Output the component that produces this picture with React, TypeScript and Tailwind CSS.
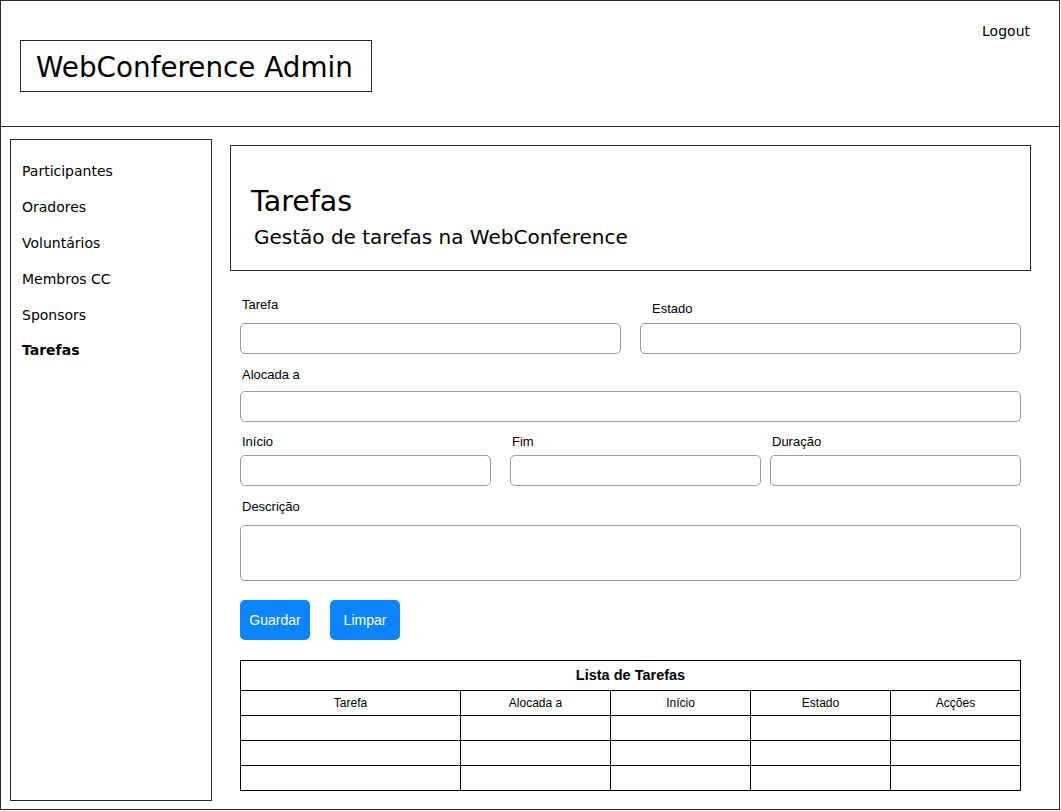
import React from 'react';

const sketch = { fontFamily: '"DejaVu Sans", Verdana, sans-serif' };
const sans = { fontFamily: '"Liberation Sans", Arial, Helvetica, sans-serif' };

const navItems = ['Participantes', 'Oradores', 'Voluntários', 'Membros CC', 'Sponsors', 'Tarefas'];
const columns = [
  { label: 'Tarefa', w: 'w-[220px]' },
  { label: 'Alocada a', w: 'w-[150px]' },
  { label: 'Início', w: 'w-[140px]' },
  { label: 'Estado', w: 'w-[140px]' },
  { label: 'Acções', w: 'w-[130px]' },
];

function Field({ className = '' }: { className?: string }) {
  return <div className={`h-[31px] rounded-[5px] border border-[#9a9a9a] bg-white ${className}`} />;
}

export default function App() {
  return (
    <div className="w-[1061px] h-[811px] bg-white text-black overflow-hidden">
      {/* Header */}
      <header className="w-[1060px] h-[127px] border border-[#2a2a2a] flex justify-between" style={sketch}>
        <div className="mt-[39px] ml-[19px] w-[352px] h-[52px] border border-[#2a2a2a] flex items-center pl-[15px] pt-[3px] text-[27.8px] leading-none whitespace-nowrap">
          WebConference Admin
        </div>
        <div className="mt-[21px] mr-[29px] text-[14px] leading-[18px]">Logout</div>
      </header>

      {/* Main */}
      <div className="w-[1060px] h-[683px] border-x border-b border-[#2a2a2a] flex pl-[9px] pt-[12px]">
        {/* Sidebar */}
        <nav className="w-[202px] h-[662px] border border-[#2a2a2a] pt-[14px] pl-[11px]" style={sketch}>
          {navItems.map((item) => (
            <div
              key={item}
              className={`h-[35.8px] flex items-center text-[14px] ${item === 'Tarefas' ? 'font-bold' : ''}`}
            >
              {item}
            </div>
          ))}
        </nav>

        {/* Content */}
        <div className="ml-[18px] pt-[6px] w-[801px]">
          <div className="w-[801px] h-[126px] border border-[#2a2a2a] pl-[20px] pt-[39px]" style={sketch}>
            <div className="text-[28.5px] leading-[34px]">Tarefas</div>
            <div className="ml-[3px] text-[20px] leading-[24px] mt-[6px] whitespace-nowrap">
              Gestão de tarefas na WebConference
            </div>
          </div>

          <div className="ml-[10px] w-[781px] text-[13px] leading-[15px]" style={sans}>
            {/* Row 1 */}
            <div className="flex gap-[19px] mt-[26px]">
              <div className="w-[381px]">
                <div className="pl-[2px] h-[15px]">Tarefa</div>
                <Field className="mt-[11px]" />
              </div>
              <div className="w-[381px]">
                <div className="pl-[12px] pt-[4px] h-[15px]">Estado</div>
                <Field className="mt-[11px]" />
              </div>
            </div>

            {/* Row 2 */}
            <div className="mt-[13px] pl-[2px]">Alocada a</div>
            <Field className="mt-[9px]" />

            {/* Row 3 */}
            <div className="flex mt-[12px]">
              <div className="w-[251px]">
                <div className="pl-[2px]">Início</div>
                <Field className="mt-[6px]" />
              </div>
              <div className="w-[251px] ml-[19px]">
                <div className="pl-[2px]">Fim</div>
                <Field className="mt-[6px]" />
              </div>
              <div className="w-[251px] ml-[9px]">
                <div className="pl-[2px]">Duração</div>
                <Field className="mt-[6px]" />
              </div>
            </div>

            {/* Row 4 */}
            <div className="mt-[13px] pl-[2px]">Descrição</div>
            <div className="mt-[11px] h-[56px] rounded-[5px] border border-[#9a9a9a]" />

            {/* Buttons */}
            <div className="flex gap-[20px] mt-[19px]">
              <button className="w-[70px] h-[40px] rounded-[5px] bg-[#0a85ff] text-white text-[14px]">Guardar</button>
              <button className="w-[70px] h-[40px] rounded-[5px] bg-[#0a85ff] text-white text-[14px]">Limpar</button>
            </div>

            {/* Table */}
            <table className="mt-[20px] w-[781px] table-fixed border-collapse">
              <colgroup>
                {columns.map((c) => (
                  <col key={c.label} className={c.w} />
                ))}
              </colgroup>
              <thead>
                <tr className="h-[30px]">
                  <th colSpan={5} className="border border-black text-[14.5px] font-bold text-center">
                    Lista de Tarefas
                  </th>
                </tr>
                <tr className="h-[25px]">
                  {columns.map((c) => (
                    <th key={c.label} className="border border-black text-[12px] font-normal text-center">
                      {c.label}
                    </th>
                  ))}
                </tr>
              </thead>
              <tbody>
                {[0, 1, 2].map((r) => (
                  <tr key={r} className="h-[25px]">
                    {columns.map((c) => (
                      <td key={c.label} className="border border-black" />
                    ))}
                  </tr>
                ))}
              </tbody>
            </table>
          </div>
        </div>
      </div>
    </div>
  );
}
